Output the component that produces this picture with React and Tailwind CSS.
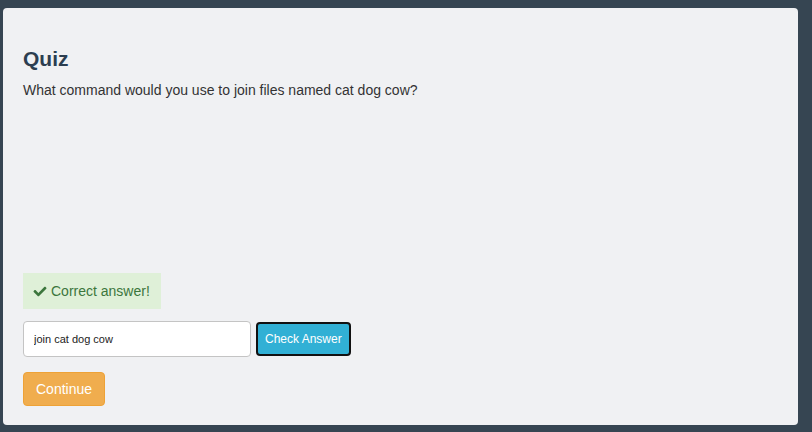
import { FaCheck } from 'react-icons/fa'

function App() {
  return (
    <div className="w-[812px] h-[432px] bg-[#364552] pt-2 pl-[3px] font-['Liberation_Sans',Arial,sans-serif]">
      <div className="w-[795px] h-[417px] bg-[#f0f1f3] rounded-[4px] px-5 pt-[37px]">
        {/* Header */}
        <h1 className="text-[21px] leading-[28px] font-bold text-[#2c3e50]">Quiz</h1>
        <p className="mt-[7px] text-[14px] leading-[20px] text-[#333]">
          What command would you use to join files named cat dog cow?
        </p>

        {/* Result */}
        <div className="mt-[173px] inline-flex items-center gap-[4px] h-9 pl-[10px] pr-[11px] bg-[#dff0d8] text-[#3c763d] text-[14px]">
          <FaCheck className="w-[14px] h-[13px]" />
          <span>Correct answer!</span>
        </div>

        {/* Answer row */}
        <div className="mt-3 flex items-center gap-[5px]">
          <input
            type="text"
            defaultValue="join cat dog cow"
            className="w-[228px] h-9 px-[10px] bg-white border border-[#c4c4c4] rounded-[4px] text-[11px] text-[#222] outline-none"
          />
          <button className="h-[34px] px-[7px] bg-[#31b0d5] border-2 border-[#111] rounded-[4px] text-[12px] text-white">
            Check Answer
          </button>
        </div>

        <button className="mt-[15px] h-[34px] px-3 bg-[#f0ad4e] border border-[#eea236] rounded-[4px] text-[14px] text-white">
          Continue
        </button>
      </div>
    </div>
  )
}

export default App
